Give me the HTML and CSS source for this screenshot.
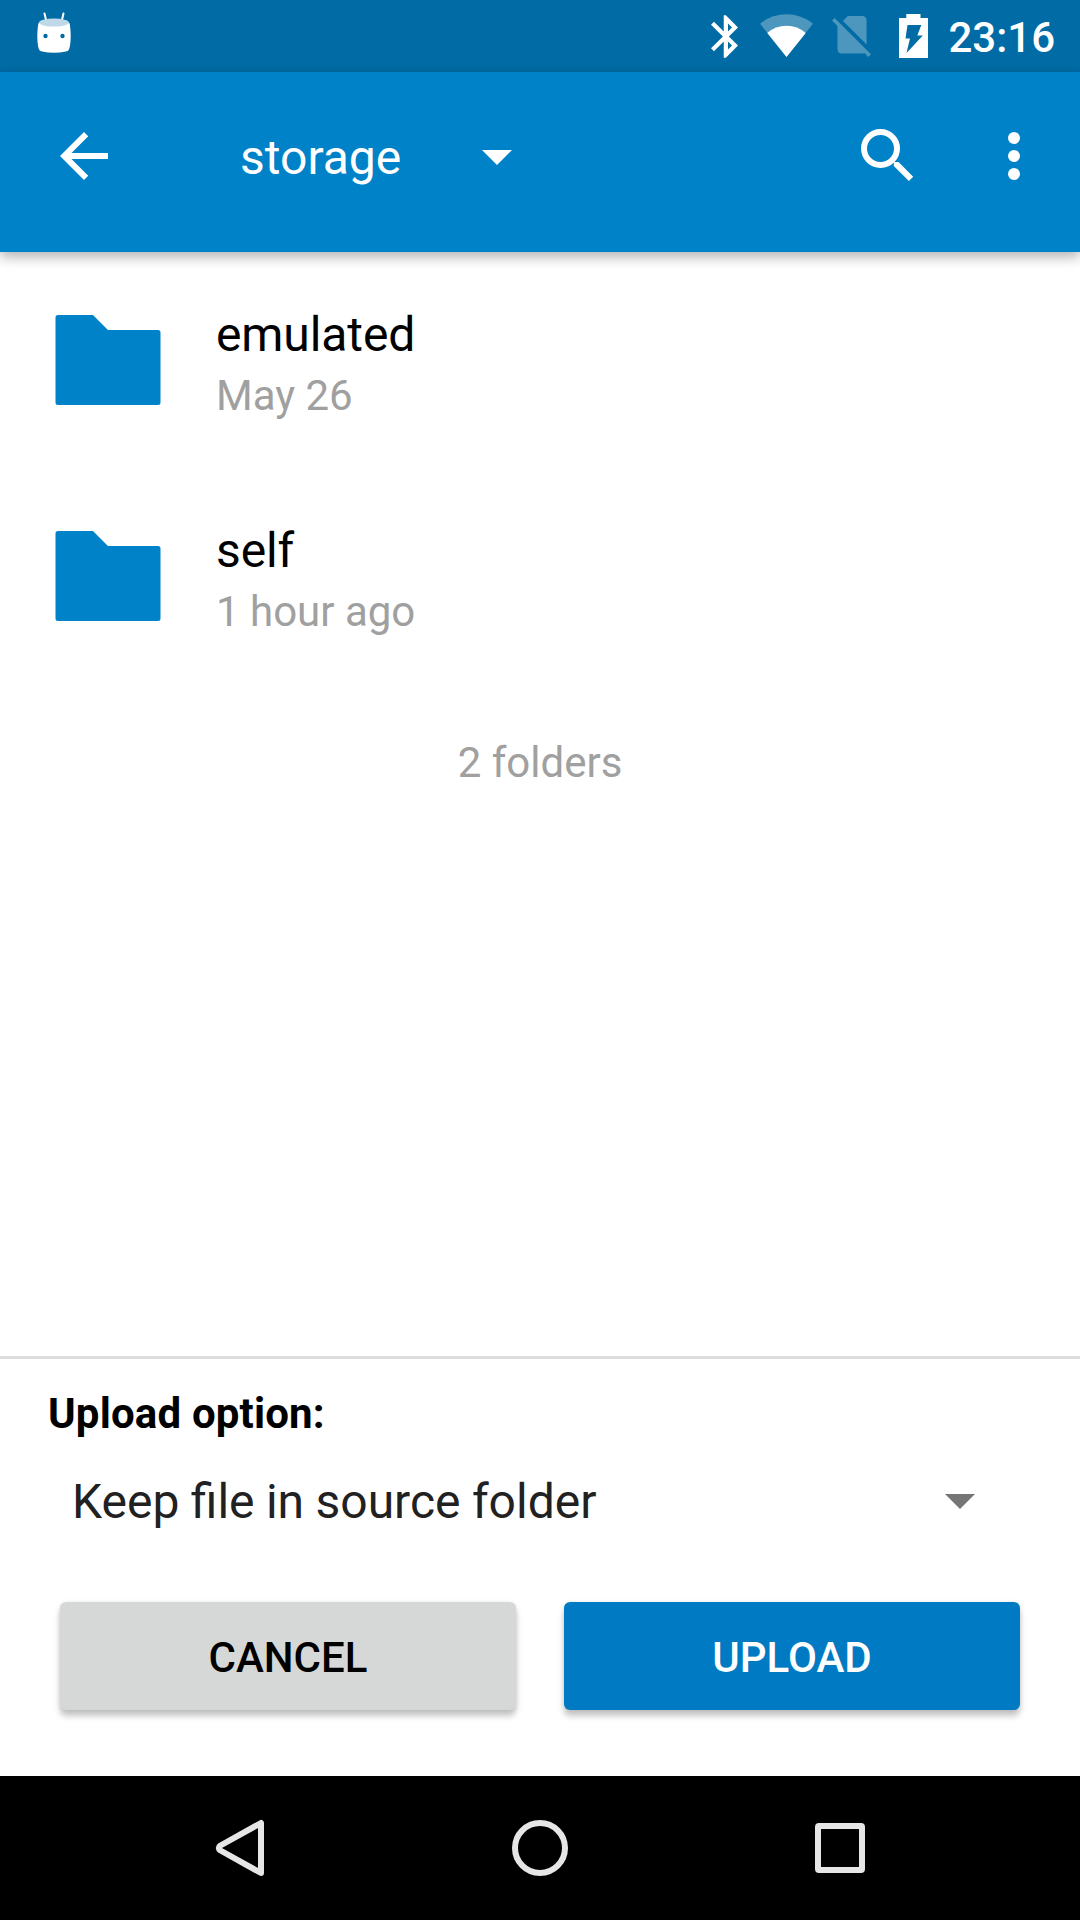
FILE: index.html
```html
<!DOCTYPE html>
<html lang="en">
<head>
<meta charset="utf-8">
<title>storage</title>
<link rel="stylesheet" href="styles.css">
</head>
<body>
<div class="screen">
  <header class="status">
    <svg class="mug" width="36" height="42" viewBox="36 12 36 42">
      <path d="M44.500 13.500L46.500 22M63.500 13.500L61.500 22" stroke="#fff" stroke-width="2" stroke-linecap="round"/>
      <path d="M38.500 23C37 30 36.700 42 38.800 49Q39.500 51 42 51.600Q54 54 66 51.600Q68.500 51 69.200 49C71.300 42 71 30 69.500 23Z" fill="#fff"/>
      <ellipse cx="54" cy="22.600" rx="15" ry="4" fill="#bfd9e8"/>
      <circle cx="45.500" cy="36" r="2.200" fill="#006ba4"/><circle cx="62.500" cy="36" r="2.200" fill="#006ba4"/>
    </svg>
    <div class="indicators">
      <svg class="bt" width="27" height="43" viewBox="5 2 12.710 20"><path fill="#fff" d="M17.710 7.710L12 2h-1v7.590L6.410 5 5 6.410 10.590 12 5 17.590 6.410 19 11 14.410V22h1l5.710-5.710-4.300-4.290 4.300-4.290zM13 5.830l1.880 1.880L13 9.590V5.830zm1.880 10.460L13 18.170v-3.760l1.880 1.880z"/></svg>
      <svg class="wifi" width="54" height="44" viewBox="760 14 54 44"><path fill="#4d97bf" d="M761 23.800Q772.500 14.300 787.500 14.300T814 23.800L787.500 57Z"/><path fill="#fff" d="M768.300 33Q776.500 25.800 787.500 25.800T806.700 33L787.500 57Z"/></svg>
      <svg class="sim" width="39" height="41" viewBox="2.380 3 18.740 19.620"><path fill="#4d97bf" d="M18.990 5c0-1.100-.890-2-1.990-2h-7L7.660 5.340 19 16.680 18.990 5zM3.650 3.880L2.380 5.150 5 7.770V19c0 1.100.9 2 2 2h10.010c.350 0 .670-.1.960-.260l1.880 1.880 1.270-1.270L3.650 3.880z"/></svg>
      <svg class="battery" width="29" height="44" viewBox="899 14 29 44"><path fill="#fff" fill-rule="evenodd" d="M906.300 14h14.200v4H928v40h-29V18h7.300ZM907.500 25L905.500 38.500H910L906.500 53L922.800 35.500H917.300L921.300 25Z"/></svg>
      <span class="clock">23:16</span>
    </div>
  </header>
  <nav class="toolbar">
    <svg class="back" width="48" height="48" viewBox="4 4 16 16"><path fill="#fff" d="M20 11H7.830l5.590-5.590L12 4l-8 8 8 8 1.410-1.410L7.830 13H20v-2z"/></svg>
    <div class="crumb"><span>storage</span><svg width="30" height="15" viewBox="0 0 30 15"><path fill="#fff" d="M0 0h30L15 15Z"/></svg></div>
    <svg class="search" width="53" height="53" viewBox="861 129 53 53"><circle cx="880.500" cy="148.500" r="16.500" fill="none" stroke="#fff" stroke-width="6"/><path fill="#fff" d="M893.800 162H898.500L913.200 176.700L908.900 181L893.800 166Z"/></svg>
    <svg class="more" width="12" height="48" viewBox="0 0 12 48"><g fill="#fff"><circle cx="6" cy="6" r="6"/><circle cx="6" cy="24" r="6"/><circle cx="6" cy="42" r="6"/></g></svg>
  </nav>
  <main class="files">
    <div class="row">
      <svg class="folder" width="106" height="90" viewBox="0 0 106 90"><path fill="#0082c9" d="M2.500 0H38L53 15H103Q105.500 15 105.500 17.500V87.500Q105.500 90 103 90H3Q.5 90 .5 87.500V2.500Q.5 0 3 0Z"/></svg>
      <div class="info"><div class="name">emulated</div><div class="date">May 26</div></div>
    </div>
    <div class="row">
      <svg class="folder" width="106" height="90" viewBox="0 0 106 90"><path fill="#0082c9" d="M2.500 0H38L53 15H103Q105.500 15 105.500 17.500V87.500Q105.500 90 103 90H3Q.5 90 .5 87.500V2.500Q.5 0 3 0Z"/></svg>
      <div class="info"><div class="name">self</div><div class="date">1 hour ago</div></div>
    </div>
    <div class="summary">2 folders</div>
  </main>
  <section class="upload">
    <div class="label">Upload option:</div>
    <div class="select"><span>Keep file in source folder</span><svg width="30" height="15" viewBox="0 0 30 15"><path fill="#757575" d="M0 0h30L15 15Z"/></svg></div>
    <div class="actions"><button class="btn">CANCEL</button><button class="btn primary">UPLOAD</button></div>
  </section>
  <footer class="navbar">
    <svg width="56" height="62" viewBox="212 1817 56 62"><path d="M261 1823V1873L220.500 1850.500Q217 1848 220.500 1845.500Z" fill="none" stroke="#e6e6e6" stroke-width="6" stroke-linejoin="round"/></svg>
    <svg class="home" width="56" height="56" viewBox="0 0 56 56"><circle cx="28" cy="28" r="25" fill="none" stroke="#e6e6e6" stroke-width="6"/></svg>
    <svg width="50" height="50" viewBox="0 0 50 50"><rect x="3" y="3" width="44" height="44" rx="1" fill="none" stroke="#e6e6e6" stroke-width="6" stroke-linejoin="round"/></svg>
  </footer>
</div>
</body>
</html>
```
FILE: styles.css
```css
* { box-sizing: border-box; }
body { margin: 0; font-family: Roboto, sans-serif; }
svg { display: block; flex: none; }
.screen { width: 1080px; height: 1920px; display: flex; flex-direction: column; background: #fff; overflow: hidden; }
.status { height: 72px; flex: none; background: #006ba4; display: flex; justify-content: space-between; padding: 0 25px 0 36px; }
.mug { margin-top: 12px; }
.indicators { display: flex; }
.bt { margin: 15px 21px 0 0; }
.wifi { margin: 14px 19px 0 0; }
.sim { margin: 16px 28px 0 0; }
.battery { margin: 14px 20px 0 0; }
.clock { color: #fff; font-size: 42px; font-weight: 500; line-height: 49px; margin-top: 13px; }
.toolbar { height: 180px; flex: none; background: #0082c9; display: flex; padding-left: 60px; box-shadow: 0 5px 12px rgba(0,0,0,.3); }
.back { margin-top: 60px; }
.crumb { display: flex; width: 753px; padding-left: 132px; color: #fff; font-size: 48px; line-height: 56px; }
.crumb span { width: 242px; margin-top: 58px; }
.crumb svg { margin-top: 78px; }
.search { margin: 57px 94px 0 0; }
.more { margin-top: 60px; }
.files { flex: 1; }
.row { height: 216px; display: flex; padding-left: 55px; }
.folder { margin: 63px 55px 0 0; }
.info { padding-top: 55px; }
.name { font-size: 48px; line-height: 56px; letter-spacing: -.1px; color: #000; }
.date { font-size: 42px; line-height: 49px; margin-top: 8px; color: #a0a0a0; }
.summary { font-size: 42px; line-height: 49px; color: #a0a0a0; text-align: center; padding-top: 54px; }
.upload { height: 420px; flex: none; border-top: 3px solid #ddd; }
.label { font-size: 42px; line-height: 49px; font-weight: 700; letter-spacing: .17px; color: #000; padding: 30px 0 0 48px; }
.select { display: flex; justify-content: space-between; height: 56px; margin-top: 36px; padding: 0 105px 0 72px; font-size: 48px; line-height: 56px; color: #212121; }
/* Word spacing keeps the fi ligature, which letter spacing would break. */
.select span { word-spacing: -.5px; }
.select svg { margin-top: 20px; }
.actions { display: flex; gap: 48px; margin-top: 72px; padding: 0 60px; }
.btn { flex: 1; height: 108px; padding: 2px 0 0; border: 0; border-radius: 6px; background: #d6d8d7; color: #000; font: 500 42px/49px Roboto, sans-serif; box-shadow: 0 6px 6px rgba(0,0,0,.23), 0 0 4px rgba(0,0,0,.08); }
.primary { background: #007bc3; color: #fff; }
.navbar { height: 144px; flex: none; background: #000; display: flex; justify-content: space-between; align-items: center; padding: 0 215px 0 212px; }
.home { margin-right: 3px; }
```
